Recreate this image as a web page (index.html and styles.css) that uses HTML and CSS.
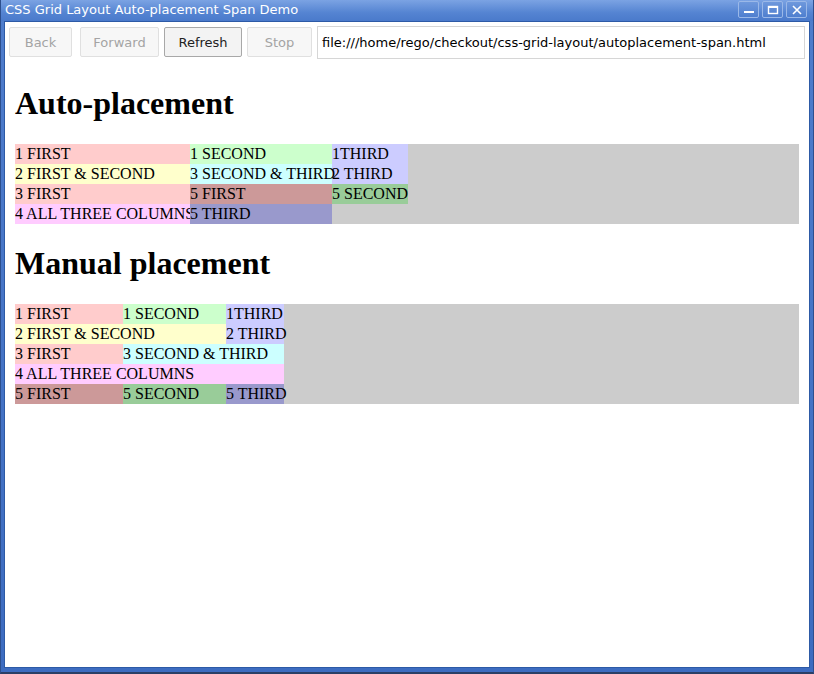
FILE: index.html
```html
<!DOCTYPE html>
<html>
<head>
<meta charset="utf-8">
<link rel="stylesheet" href="styles.css">
</head>
<body>
<div class="window">
  <div class="titlebar">
    <span class="title">CSS Grid Layout Auto-placement Span Demo</span>
    <div class="wbtns">
      <span class="wbtn"><svg width="12" height="10" viewBox="0 0 12 10"><rect x="1" y="6" width="10" height="2" fill="#fff"/></svg></span>
      <span class="wbtn"><svg width="12" height="10" viewBox="0 0 12 10"><rect x="1.5" y="1.5" width="9" height="7" fill="none" stroke="#fff" stroke-width="1.4"/><rect x="1" y="1" width="10" height="2" fill="#fff"/></svg></span>
      <span class="wbtn"><svg width="12" height="10" viewBox="0 0 12 10"><path d="M2 1 L10 9 M10 1 L2 9" stroke="#fff" stroke-width="1.6"/></svg></span>
    </div>
  </div>
  <div class="client">
    <div class="toolbar">
      <button class="btn b-back" disabled>Back</button>
      <button class="btn b-fwd" disabled>Forward</button>
      <button class="btn b-ref">Refresh</button>
      <button class="btn b-stop" disabled>Stop</button>
      <div class="url">file:///home/rego/checkout/css-grid-layout/autoplacement-span.html</div>
    </div>
    <div class="page">
      <h1>Auto-placement</h1>
      <div class="grid g-auto">
        <div class="c1 r1 first">1 FIRST</div>
        <div class="c2 r1 second">1 SECOND</div>
        <div class="c3 r1 third">1THIRD</div>
        <div class="c1 r2 fs">2 FIRST &amp; SECOND</div>
        <div class="c2 r2 st">3 SECOND &amp; THIRD</div>
        <div class="c3 r2 third">2 THIRD</div>
        <div class="c1 r3 first">3 FIRST</div>
        <div class="c2 r3 first5">5 FIRST</div>
        <div class="c3 r3 second5">5 SECOND</div>
        <div class="c1 r4 all">4 ALL THREE COLUMNS</div>
        <div class="c2 r4 third5">5 THIRD</div>
      </div>
      <h1>Manual placement</h1>
      <div class="grid g-man">
        <div class="c1 r1 first">1 FIRST</div>
        <div class="c2 r1 second">1 SECOND</div>
        <div class="c3 r1 third">1THIRD</div>
        <div class="c12 r2 fs">2 FIRST &amp; SECOND</div>
        <div class="c3 r2 third">2 THIRD</div>
        <div class="c1 r3 first">3 FIRST</div>
        <div class="c23 r3 st">3 SECOND &amp; THIRD</div>
        <div class="c123 r4 all">4 ALL THREE COLUMNS</div>
        <div class="c1 r5 first5">5 FIRST</div>
        <div class="c2 r5 second5">5 SECOND</div>
        <div class="c3 r5 third5">5 THIRD</div>
      </div>
    </div>
  </div>
</div>
</body>
</html>
```
FILE: styles.css
```css
html, body {
  margin: 0;
  padding: 0;
  background: #3a64ad;
}
.window {
  width: 814px;
  height: 674px;
  box-sizing: border-box;
  display: flex;
  flex-direction: column;
  background: linear-gradient(#4f7dcc, #3d6cc0);
  border-left: 1px solid #2d4f8e;
  border-right: 1px solid #2d4f8e;
  border-bottom: 2px solid #2b3f66;
}
.titlebar {
  height: 21px;
  flex: none;
  display: flex;
  align-items: center;
  justify-content: space-between;
  background: linear-gradient(#7ba3e3, #5584d2 60%, #4a7acb);
  color: #fff;
  font-family: "DejaVu Sans", sans-serif;
  font-size: 13px;
  padding: 0 6px 0 4px;
}
.title { position: relative; top: -1px; }
.wbtns { display: flex; gap: 3px; position: relative; top: -1px; }
.wbtn {
  width: 21px;
  height: 17px;
  box-sizing: border-box;
  border: 1px solid #9ab8e8;
  border-radius: 2px;
  background: linear-gradient(#6e98dc, #4f7fcf);
  display: flex;
  align-items: center;
  justify-content: center;
}
.client {
  flex: 1;
  margin: 0 3px 4px 3px;
  background: #fff;
  border: 1px solid #2d5aa6;
  display: flex;
  flex-direction: column;
  padding: 0 2px;
}
.toolbar {
  height: 42px;
  flex: none;
  box-sizing: border-box;
  display: flex;
  align-items: flex-start;
  padding: 5px 0 0 2px;
  gap: 5px;
  font-family: "DejaVu Sans", sans-serif;
  font-size: 13px;
}
.btn {
  height: 30px;
  box-sizing: border-box;
  font-family: "DejaVu Sans", sans-serif;
  font-size: 13px;
  border: 1px solid #e0e0e0;
  border-radius: 2px;
  background: #f7f7f7;
  color: #a4a4a4;
  padding: 0;
}
.b-back { width: 63px; margin-right: 3px; }
.b-fwd { width: 79px; }
.b-ref { width: 78px; color: #222; border-color: #a8a8a8; background: #f3f3f3; }
.b-stop { width: 65px; }
.url {
  flex: 1;
  height: 33px;
  margin-top: -1px;
  box-sizing: border-box;
  border: 1px solid #d6d6d6;
  display: flex;
  align-items: center;
  padding-left: 4px;
  color: #000;
  margin-right: 2px;
}
.page {
  flex: 1;
  padding: 0 8px;
  font-family: "Liberation Serif", "Times New Roman", serif;
  font-size: 16px;
  overflow: hidden;
}
h1 {
  font-size: 32px;
  font-weight: bold;
  margin: 21.44px 0;
  line-height: 37px;
}
.grid {
  display: grid;
  grid-auto-rows: 20px;
  background: #ccc;
  line-height: 20px;
  white-space: nowrap;
}
.g-auto { grid-template-columns: 175px 142px 76px 1fr; }
.g-man { grid-template-columns: 108px 103px 58px 1fr; }
.r1 { grid-row: 1; }
.r2 { grid-row: 2; }
.r3 { grid-row: 3; }
.r4 { grid-row: 4; }
.r5 { grid-row: 5; }
.c1 { grid-column: 1; }
.c2 { grid-column: 2; position: relative; z-index: 1; }
.c3 { grid-column: 3; }
.c12 { grid-column: 1 / 3; }
.c23 { grid-column: 2 / 4; }
.c123 { grid-column: 1 / 4; }
.first { background: #fcc; }
.second { background: #cfc; }
.third { background: #ccf; }
.fs { background: #ffc; }
.st { background: #cff; }
.all { background: #fcf; }
.first5 { background: #c99; }
.second5 { background: #9c9; }
.third5 { background: #99c; }
```
